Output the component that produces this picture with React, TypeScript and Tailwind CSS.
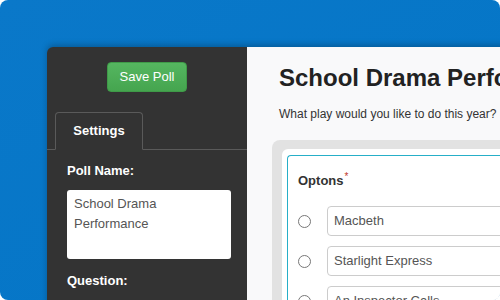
export default function App() {
  const options = ["Macbeth", "Starlight Express", "An Inspector Calls"];
  return (
    <div className="w-[500px] h-[300px] overflow-hidden bg-white" style={{ fontFamily: '"Liberation Sans", Arial, sans-serif' }}>
      <div className="w-full h-full rounded-lg overflow-hidden bg-gradient-to-br from-[#0a78c9] to-[#0375c6] pl-[47px] pt-[47px]">
        <div className="flex h-[300px] w-[500px] rounded-tl-md overflow-hidden shadow-[0_-2px_6px_rgba(0,0,0,0.25)]">
          {/* sidebar */}
          <div className="w-[200px] shrink-0 bg-[#333333] flex flex-col">
            <div className="flex justify-center pt-[15px]">
              <button className="w-[80px] h-[30px] rounded-[4px] bg-gradient-to-b from-[#55b660] to-[#45a54f] text-white text-[13px] border border-[#3f9a48]">
                Save Poll
              </button>
            </div>
            <div className="mt-[20px] border-b border-[#5a5a5a] pl-[8px] flex">
              <div className="w-[88px] h-[38px] -mb-px border border-[#5a5a5a] border-b-[#333333] rounded-t-[4px] bg-[#333333] flex items-center justify-center text-white font-bold text-[13px]">
                Settings
              </div>
            </div>
            <div className="pl-[20px] pr-[16px]">
              <div className="mt-[13px] text-white font-bold text-[13px] leading-[16px]">Poll Name:</div>
              <div className="mt-[11px] w-[164px] h-[69px] bg-white rounded-[3px] px-[7px] pt-[4px] text-[13px] leading-[20px] text-[#555]">
                School Drama<br />Performance
              </div>
              <div className="mt-[14px] text-white font-bold text-[13px] leading-[16px]">Question:</div>
            </div>
          </div>
          {/* main */}
          <div className="flex-1 bg-[#f9f9fa] pl-[25px]">
            <div className="pl-[7px] pt-[17px] whitespace-nowrap text-[24px] font-bold leading-[28px] text-[#222]">
              School Drama Performance
            </div>
            <div className="pl-[7px] mt-[15px] text-[12px] leading-[14px] text-[#333] whitespace-nowrap">
              What play would you like to do this year?
            </div>
            <div className="mt-[19px] bg-[#e2e2e2] rounded-l-lg pl-[10px] pt-[9px] h-[200px]">
              <div className="bg-white rounded-tl-md pl-[5px] pt-[6px] h-full">
                <div className="border-l-[1.5px] border-t-[1.5px] border-[#26afc8] rounded-tl-[4px] h-full pl-[10px] pt-[17px]">
                  <div className="text-[13px] font-bold text-[#333] leading-[16px]">
                    Optons<sup className="text-[#c0392b] font-normal text-[10px] ml-px">*</sup>
                  </div>
                  <div className="mt-[17px] flex flex-col gap-[10px]">
                    {options.map((o) => (
                      <div key={o} className="flex items-center">
                        <div className="w-[13px] h-[13px] rounded-full border border-[#777] bg-white" />
                        <div className="ml-[16px] w-[200px] h-[30px] border border-[#ccc] rounded-[4px] bg-white flex items-center pl-[6px] text-[13px] text-[#555] whitespace-nowrap">
                          {o}
                        </div>
                      </div>
                    ))}
                  </div>
                </div>
              </div>
            </div>
          </div>
        </div>
      </div>
    </div>
  );
}
